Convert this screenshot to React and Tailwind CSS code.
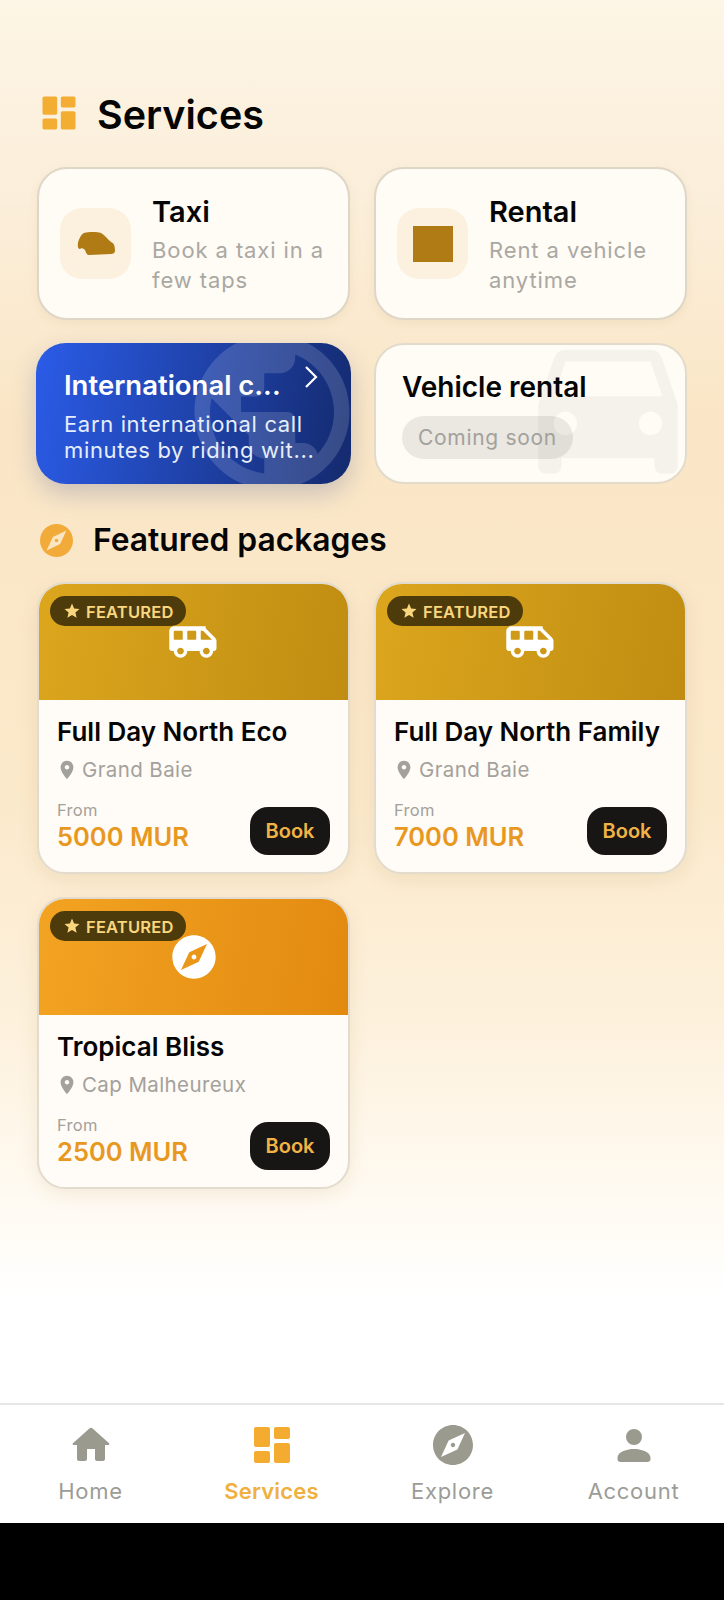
const P = {
  dash: "M4 13h6c.55 0 1-.45 1-1V4c0-.55-.45-1-1-1H4c-.55 0-1 .45-1 1v8c0 .55.45 1 1 1zm0 8h6c.55 0 1-.45 1-1v-4c0-.55-.45-1-1-1H4c-.55 0-1 .45-1 1v4c0 .55.45 1 1 1zm10 0h6c.55 0 1-.45 1-1v-8c0-.55-.45-1-1-1h-6c-.55 0-1 .45-1 1v8c0 .55.45 1 1 1zM13 4v4c0 .55.45 1 1 1h6c.55 0 1-.45 1-1V4c0-.55-.45-1-1-1h-6c-.55 0-1 .45-1 1z",
  home: "M10 19v-5h4v5c0 .55.45 1 1 1h3c.55 0 1-.45 1-1v-7h1.7c.46 0 .68-.57.33-.87L12.67 3.6c-.38-.34-.96-.34-1.34 0l-8.36 7.53c-.34.3-.13.87.33.87H5v7c0 .55.45 1 1 1h3c.55 0 1-.45 1-1z",
  explore: "M12 10.9c-.61 0-1.1.49-1.1 1.1s.49 1.1 1.1 1.1c.61 0 1.1-.49 1.1-1.1s-.49-1.1-1.1-1.1zM12 2C6.48 2 2 6.48 2 12s4.48 10 10 10 10-4.48 10-10S17.52 2 12 2zm2.19 12.19L6 18l3.81-8.19L18 6l-3.81 8.19z",
  person: "M12 4a4 4 0 1 0 0 8 4 4 0 0 0 0-8zM12 14c-3.200 0-8.250 1.300-8.250 4.400V19c0 .85.65 1.500 1.500 1.500h13.500c.85 0 1.500-.65 1.500-1.500v-.6c0-3.100-5.050-4.400-8.250-4.400z",
  van: "M16.600 5H3.200C1.950 5 1 5.950 1 7.200V14.800c0 .7.5 1.200 1.200 1.200H3c0 1.650 1.350 3 3 3s3-1.350 3-3h5.500c0 1.650 1.350 3 3 3s3-1.350 3-3h.300c.7 0 1.200-.5 1.200-1.200v-3.200c0-.6-.25-1.100-.65-1.500l-4.300-4.300C17.650 5.200 17.150 5 16.600 5zM3.500 11c-.3 0-.5-.2-.5-.5v-3c0-.3.2-.5.5-.5h3c.3 0 .5.2.5.5v3c0 .3-.2.5-.5.5h-3zM6 17.500c-.83 0-1.500-.67-1.500-1.500s.67-1.500 1.500-1.500 1.500.67 1.500 1.500-.67 1.500-1.500 1.500zM12.500 11h-3c-.3 0-.5-.2-.5-.5v-3c0-.3.2-.5.5-.5h3c.3 0 .5.2.5.5v3c0 .3-.2.5-.5.5zM17.500 17.500c-.83 0-1.500-.67-1.500-1.500s.67-1.500 1.500-1.500 1.500.67 1.500 1.500-.67 1.500-1.500 1.500zM15.500 11c-.3 0-.5-.2-.5-.5V7h1l4 4h-4.500z",
  pin: "M12 2C8.13 2 5 5.13 5 9c0 5.25 7 13 7 13s7-7.75 7-13c0-3.87-3.13-7-7-7zm0 9.5c-1.38 0-2.5-1.12-2.5-2.5s1.12-2.5 2.5-2.5 2.5 1.12 2.5 2.5-1.12 2.5-2.5 2.5z",
  star: "M12 17.27L18.18 21l-1.64-7.03L22 9.24l-7.19-.61L12 2 9.19 8.63 2 9.24l5.46 4.73L5.82 21z",
  car: "M18.92 6.01C18.72 5.42 18.16 5 17.5 5h-11c-.66 0-1.21.42-1.42 1.01L3 12v8c0 .55.45 1 1 1h1c.55 0 1-.45 1-1v-1h12v1c0 .55.45 1 1 1h1c.55 0 1-.45 1-1v-8l-2.08-5.99zM6.5 16c-.83 0-1.5-.67-1.5-1.5S5.67 13 6.5 13s1.5.67 1.5 1.5S7.33 16 6.5 16zm11 0c-.83 0-1.5-.67-1.5-1.5s.67-1.5 1.5-1.5 1.5.67 1.5 1.5-.67 1.5-1.5 1.5zM5 11l1.5-4.5h11L19 11H5z",
  globe: "M12 2C6.48 2 2 6.48 2 12s4.48 10 10 10 10-4.48 10-10S17.52 2 12 2zm-1 17.93c-3.95-.49-7-3.85-7-7.93 0-.62.08-1.21.21-1.79L9 15v1c0 1.1.9 2 2 2v1.93zm6.9-2.54c-.26-.81-1-1.39-1.9-1.39h-1v-3c0-.55-.45-1-1-1H8v-2h2c.55 0 1-.45 1-1V7h2c1.1 0 2-.9 2-2v-.41c2.93 1.19 5 4.06 5 7.41 0 2.08-.8 3.97-2.1 5.39z",
};

function Icon({ d, className }) {
  return (
    <svg viewBox="0 0 24 24" className={className} fill="currentColor" fillRule="evenodd">
      <path d={d} />
    </svg>
  );
}

function ServiceCard({ title, lines, icon }) {
  return (
    <div className="flex h-[153px] items-center rounded-[30px] border-2 border-[#ded6c7] bg-[#fffbf5] pl-[21px] shadow-[0_3px_10px_rgba(150,110,40,0.08)]">
      <div className="flex h-[71px] w-[71px] shrink-0 items-center justify-center rounded-[22px] bg-[#fcf1df]">
        {icon}
      </div>
      <div className="ml-[21px] flex flex-col pt-[3px]">
        <div className="text-[29px] leading-[34px] font-semibold text-[#050505]">{title}</div>
        <div className="mt-[6px] text-[22px] leading-[30px] tracking-[0.9px] text-[#aaa8a2]">
          {lines.map((l) => (
            <div key={l}>{l}</div>
          ))}
        </div>
      </div>
    </div>
  );
}

function PackageCard({ title, place, price, hero, icon }) {
  return (
    <div className="flex h-[292px] flex-col overflow-hidden rounded-[28px] border-2 border-[#e2dbce] bg-[#fffbf6] shadow-[0_6px_18px_rgba(150,110,40,0.1)]">
      <div className={`relative flex h-[116px] shrink-0 items-center justify-center ${hero}`}>
        <div className="absolute top-[12px] left-[11px] flex h-[30px] w-[136px] items-center rounded-full bg-[#4e3b0b] pl-[13px] text-[#fad77f]">
          <Icon d={P.star} className="h-[18px] w-[18px]" />
          <span className="mt-[2px] ml-[5px] text-[16.5px] leading-[30px] font-semibold tracking-[0.2px]">FEATURED</span>
        </div>
        {icon}
      </div>
      <div className="relative flex flex-1 flex-col pt-[16px] pl-[18px]">
        <div className="text-[26px] leading-[32px] font-semibold text-[#050505]">{title}</div>
        <div className="mt-[9px] flex h-[26px] items-center text-[#a3a19c]">
          <Icon d={P.pin} className="-ml-[1px] h-[22px] w-[22px]" />
          <span className="ml-[4px] text-[20.5px] leading-[26px] tracking-[0.4px]">{place}</span>
        </div>
        <div className="mt-[17px] text-[16.5px] leading-[20px] tracking-[0.3px] text-[#a3a19c]">From</div>
        <div className="text-[25.5px] leading-[33px] font-semibold text-[#e8981f]">{price}</div>
        <div className="absolute right-[18px] bottom-[17px] flex h-[48px] w-[80px] items-center justify-center rounded-[18px] bg-[#171614] text-[20px] font-semibold text-[#f2b345]">
          Book
        </div>
      </div>
    </div>
  );
}

function Tab({ d, label, active, className }) {
  return (
    <div className={`flex flex-col items-center ${active ? "text-[#f3ac30]" : "text-[#9a9a8e]"}`}>
      <Icon d={d} className={className} />
      <span className={`mt-[8px] text-[22px] leading-[28px] ${active ? "font-semibold tracking-[0.2px] text-[#f0b040]" : "font-normal tracking-[0.7px] text-[#9c9c96]"}`}>
        {label}
      </span>
    </div>
  );
}

export default function App() {
  const gold = "bg-[linear-gradient(100deg,#dca61d,#c08d12)]";
  const orange = "bg-[linear-gradient(100deg,#f3a322,#e28a10)]";
  return (
    <div className="flex h-[1600px] w-[724px] flex-col bg-black font-['Inter',sans-serif]">
      <main className="h-[1403px] shrink-0 bg-[linear-gradient(180deg,#fdf5e5_0px,#fbeeda_200px,#fae6c6_420px,#fbe9cb_800px,#fdf0da_1000px,#fffbf4_1220px,#ffffff_1300px)] px-[37px] pt-[94px]">
        <div className="flex h-[42px] items-center">
          <Icon d={P.dash} className="-mt-[4px] h-[44px] w-[44px] shrink-0 text-[#f4ad33]" />
          <h1 className="ml-[16px] text-[39.5px] leading-[42px] font-semibold text-[#050505]">Services</h1>
        </div>

        <div className="mt-[31px] grid grid-cols-[313px_313px] gap-x-[24px] gap-y-[23px]">
          <ServiceCard
            title="Taxi"
            lines={["Book a taxi in a", "few taps"]}
            icon={
              <svg viewBox="0 0 38 23" className="h-[23px] w-[38px]" fill="#b07a14">
                <path d="M1 15C0 11 3 3 7 1C12-.3 20-.3 24 1C28 3 31 8 34 10C37 11 38 14 38 19C38 21 36 22 34 22L12 23C10 23 9 21 8 18C6 16 4 16 3 17C2 17 1 16 1 15z" />
              </svg>
            }
          />
          <ServiceCard
            title="Rental"
            lines={["Rent a vehicle", "anytime"]}
            icon={<div className="h-[36px] w-[40px] bg-[#b07a14]" />}
          />

          <div className="relative -mx-[1px] h-[141px] overflow-hidden rounded-[30px] bg-[linear-gradient(100deg,#2b5ce8,#142a6e)] pt-[25px] pl-[28px] shadow-[0_10px_24px_rgba(40,60,130,0.22)]">
            <Icon d={P.globe} className="absolute top-[-24px] left-[143px] h-[186px] w-[186px] text-white/15" />
            <div className="relative text-[27.5px] leading-[34px] font-semibold text-white">International c...</div>
            <div className="relative mt-[9px] text-[22px] leading-[26px] tracking-[0.65px] text-[#e6edfb]">
              <div>Earn international call</div>
              <div>minutes by riding wit...</div>
            </div>
            <svg viewBox="0 0 14 22" className="absolute top-[23px] left-[268px] h-[22px] w-[14px]" fill="none" stroke="#ffffff" strokeWidth="2.200">
              <path d="M2 1l10 10-10 10" />
            </svg>
          </div>

          <div className="relative h-[141px] overflow-hidden rounded-[30px] border-2 border-[#e2dbcc] bg-[#fffbf5] pt-[25px] pl-[26px]">
            <Icon d={P.car} className="absolute top-[-34px] left-[139px] h-[186px] w-[186px] text-black/[0.04]" />
            <div className="relative text-[28px] leading-[34px] font-semibold text-[#050505]">Vehicle rental</div>
            <div className="relative mt-[12px] flex h-[43px] w-[171px] items-center justify-center rounded-full bg-black/[0.08] text-[21px] tracking-[0.7px] text-[#a3a19c]">
              Coming soon
            </div>
          </div>
        </div>

        <div className="mt-[39px] flex h-[34px] items-center">
          <div className="ml-[3px] h-[33px] w-[33px] shrink-0">
            <svg viewBox="2 2 20 20" className="h-[33px] w-[33px]">
              <circle cx="12" cy="12" r="10" fill="#f2ab38" />
              <path d="M6 18l3.810-8.190L18 6l-3.810 8.190z" fill="#fbe6c4" />
              <circle cx="12" cy="12" r="1.100" fill="#f2ab38" />
            </svg>
          </div>
          <h2 className="ml-[20px] text-[31.8px] leading-[34px] font-semibold text-[#050505]">Featured packages</h2>
        </div>

        <div className="mt-[25px] grid grid-cols-[313px_313px] gap-x-[24px] gap-y-[23px]">
          <PackageCard title="Full Day North Eco" place="Grand Baie" price="5000 MUR" hero={gold} icon={<Icon d={P.van} className="h-[54px] w-[54px] text-white" />} />
          <PackageCard title="Full Day North Family" place="Grand Baie" price="7000 MUR" hero={gold} icon={<Icon d={P.van} className="h-[54px] w-[54px] text-white" />} />
          <PackageCard title="Tropical Bliss" place="Cap Malheureux" price="2500 MUR" hero={orange} icon={<Icon d={P.explore} className="h-[52px] w-[52px] text-white" />} />
        </div>
      </main>

      <nav className="grid h-[120px] shrink-0 grid-cols-4 border-t-2 border-[#e6e6e6] bg-white pt-[16px]">
        <Tab d={P.home} label="Home" className="h-[48px] w-[48px]" />
        <Tab d={P.dash} label="Services" active className="h-[48px] w-[48px]" />
        <Tab d={P.explore} label="Explore" className="h-[48px] w-[48px]" />
        <Tab d={P.person} label="Account" className="h-[48px] w-[48px]" />
      </nav>
    </div>
  );
}
